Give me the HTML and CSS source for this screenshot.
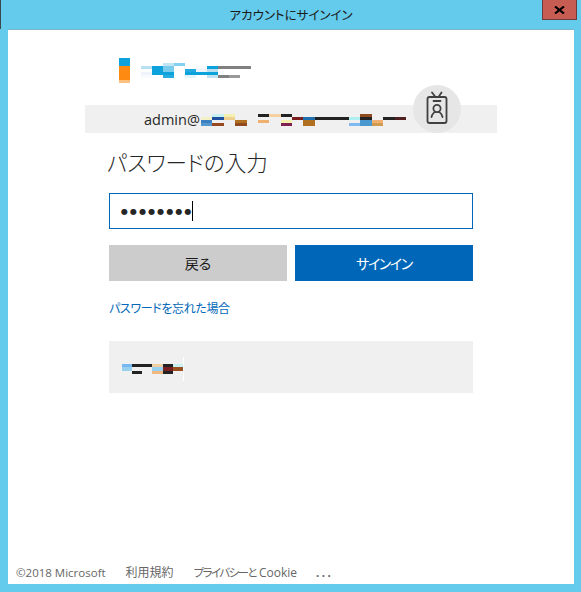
FILE: index.html
```html
<!DOCTYPE html>
<html lang="ja">
<head>
  <meta charset="UTF-8" />
  <meta name="viewport" content="width=device-width, initial-scale=1.0"/>
  <title>アカウントにサインイン</title>
  <link rel="stylesheet" href="styles.css">
</head>
<body>

  <div class="titlebar">
    <span class="title">アカウントにサインイン</span>
    <button class="close">
      <svg width="11" height="8" viewBox="0 0 11 8"><path d="M1 0.5 L10 7.5 M10 0.5 L1 7.5" stroke="#000" stroke-width="2.2" fill="none"/></svg>
    </button>
  </div>

  <div class="client">
    <!-- logo, mosaic of the screenshot -->
    <svg class="logo" width="132" height="25" viewBox="119 58 132 25" shape-rendering="crispEdges">
      <rect x="119" y="58" width="11" height="8" fill="#0ea2dc"/>
      <rect x="119" y="66" width="11" height="14" fill="#ff8a12"/>
      <rect x="119" y="80" width="11" height="3" fill="#ffc080"/>
      <rect x="141" y="66" width="11" height="3" fill="#b9e0f2"/>
      <rect x="141" y="72" width="11" height="3" fill="#f0f3fa"/>
      <rect x="141" y="75" width="11" height="3" fill="#f8fafd"/>
      <rect x="152" y="66" width="11" height="9" fill="#0ea2dc"/>
      <rect x="163" y="63" width="11" height="3" fill="#bfe5f3"/>
      <rect x="163" y="66" width="11" height="6" fill="#7accec"/>
      <rect x="163" y="72" width="11" height="3" fill="#0ea2dc"/>
      <rect x="163" y="75" width="11" height="3" fill="#25ade0"/>
      <rect x="174" y="63" width="11" height="3" fill="#85d0ee"/>
      <rect x="185" y="69" width="11" height="3" fill="#22a9df"/>
      <rect x="185" y="72" width="11" height="3" fill="#0ea2dc"/>
      <rect x="185" y="75" width="11" height="3" fill="#e4f4fa"/>
      <rect x="196" y="66" width="11" height="3" fill="#f8f9fd"/>
      <rect x="196" y="69" width="11" height="3" fill="#eef4fb"/>
      <rect x="196" y="72" width="11" height="3" fill="#0ea2dc"/>
      <rect x="207" y="66" width="11" height="3" fill="#0ea2dc"/>
      <rect x="207" y="69" width="11" height="3" fill="#b9dff0"/>
      <rect x="207" y="72" width="11" height="3" fill="#0ea2dc"/>
      <rect x="207" y="75" width="11" height="3" fill="#c0e3f2"/>
      <rect x="218" y="66" width="33" height="3" fill="#808080"/>
      <rect x="218" y="75" width="11" height="3" fill="#808080"/>
      <rect x="229" y="75" width="11" height="3" fill="#999999"/>
    </svg>

    <div class="account">
      <span class="email">admin@</span>
      <svg class="mosaic" width="205" height="12" viewBox="201 113 205 12" shape-rendering="crispEdges">
        <rect x="201" y="116" width="11" height="3" fill="#f3f0c8"/>
        <rect x="201" y="119" width="11" height="3" fill="#3a7fc0"/>
        <rect x="201" y="122" width="11" height="3" fill="#5598d0"/>
        <rect x="212" y="113" width="12" height="3" fill="#c8f0f0"/>
        <rect x="212" y="116" width="12" height="3" fill="#2050a0"/>
        <rect x="212" y="122" width="12" height="3" fill="#96491f"/>
        <rect x="224" y="113" width="11" height="3" fill="#f3f0b0"/>
        <rect x="224" y="116" width="11" height="3" fill="#f0d090"/>
        <rect x="235" y="119" width="12" height="3" fill="#b07020"/>
        <rect x="235" y="122" width="12" height="3" fill="#8f4a20"/>
        <rect x="258" y="113" width="11" height="3" fill="#222222"/>
        <rect x="258" y="119" width="11" height="3" fill="#f0b070"/>
        <rect x="269" y="113" width="12" height="3" fill="#f5d0a0"/>
        <rect x="281" y="113" width="11" height="3" fill="#222222"/>
        <rect x="281" y="119" width="11" height="3" fill="#f5f0b0"/>
        <rect x="281" y="122" width="11" height="3" fill="#802050"/>
        <rect x="292" y="116" width="11" height="3" fill="#7a2020"/>
        <rect x="303" y="116" width="12" height="3" fill="#2070b0"/>
        <rect x="303" y="119" width="12" height="6" fill="#b07020"/>
        <rect x="315" y="116" width="34" height="3" fill="#222222"/>
        <rect x="349" y="116" width="11" height="3" fill="#b0f0f0"/>
        <rect x="349" y="122" width="11" height="3" fill="#80b8f0"/>
        <rect x="360" y="113" width="12" height="3" fill="#904a20"/>
        <rect x="360" y="116" width="12" height="3" fill="#222222"/>
        <rect x="360" y="119" width="12" height="6" fill="#4a98d0"/>
        <rect x="372" y="119" width="11" height="3" fill="#f0b070"/>
        <rect x="372" y="122" width="11" height="3" fill="#d09a50"/>
        <rect x="383" y="116" width="12" height="3" fill="#222222"/>
        <rect x="395" y="116" width="11" height="3" fill="#502020"/>
      </svg>
      <div class="avatar">
        <svg width="48" height="48" viewBox="0 0 48 48" fill="none" stroke="#404040" stroke-width="1.8" stroke-linecap="round" stroke-linejoin="round">
          <rect x="14.5" y="12" width="19" height="26" rx="2"/>
          <path d="M19 7.5 L22.5 12 M28.5 7.5 L25.5 12 M20.5 16 H27.5"/>
          <circle cx="24" cy="23.5" r="3.6"/>
          <path d="M18.5 32 C19.2 29 21 27.4 22.4 27 M29.5 32 C28.8 29 27 27.4 25.6 27"/>
        </svg>
      </div>
    </div>

    <div class="form">
      <h1 class="heading">パスワードの入力</h1>
      <div class="password"><span class="dots">●●●●●●●●</span><span class="caret"></span></div>
      <div class="buttons">
        <button class="btn btn-back">戻る</button>
        <button class="btn btn-signin">サインイン</button>
      </div>
      <a class="forgot" href="#">パスワードを忘れた場合</a>
      <div class="panel">
        <svg width="62" height="24" viewBox="122 357 62 24" shape-rendering="crispEdges">
          <rect x="122" y="364" width="10" height="3" fill="#78b8f0"/>
          <rect x="122" y="367" width="10" height="4" fill="#98d0f0"/>
          <rect x="132" y="364" width="20" height="3" fill="#222222"/>
          <rect x="132" y="371" width="10" height="3" fill="#222222"/>
          <rect x="152" y="364" width="11" height="3" fill="#f0d0a0"/>
          <rect x="152" y="367" width="11" height="4" fill="#98d0f0"/>
          <rect x="152" y="371" width="11" height="3" fill="#f0b880"/>
          <rect x="163" y="364" width="10" height="3" fill="#222222"/>
          <rect x="163" y="367" width="10" height="4" fill="#7a2020"/>
          <rect x="163" y="371" width="10" height="3" fill="#222222"/>
          <rect x="173" y="364" width="10" height="3" fill="#c8f0f0"/>
          <rect x="173" y="367" width="10" height="4" fill="#9a5020"/>
          <rect x="183" y="357" width="1" height="24" fill="#ffffff"/>
        </svg>
      </div>
    </div>

    <div class="footer">
      <span class="copyright">©2018 Microsoft</span>
      <a href="#">利用規約</a>
      <a href="#"><span class="kana">プライバシーと</span> Cookie</a>
      <span class="more">...</span>
    </div>
  </div>

</body>
</html>
```

FILE: styles.css
```css
* {
  box-sizing: border-box;
}
body {
  margin: 0;
  height: 592px;
  overflow: hidden;
  background: #65cbec;
  font-family: "Open Sans", "Noto Sans CJK JP", sans-serif;
  font-feature-settings: "palt";
  color: #262626;
}
.titlebar {
  position: relative;
  height: 29px;
  display: flex;
  align-items: center;
  justify-content: center;
  border-left: 1px solid #3c4a50;
}
.title {
  font-family: "Noto Sans CJK JP", sans-serif;
  font-size: 12.5px;
  color: #1a1a1a;
}
.close {
  position: absolute;
  top: -1px;
  left: 541px;
  width: 35px;
  height: 21px;
  padding: 0;
  display: flex;
  align-items: center;
  justify-content: center;
  background: #c75c52;
  border: 1px solid #6e3b3d;
}
.client {
  display: flex;
  flex-direction: column;
  width: 566px;
  height: 555px;
  margin-left: 8px;
  background: #ffffff;
  border-top: 1px solid #7ab4cf;
}
.logo {
  display: block;
  margin: 28px 0 22px 111px;
}
.account {
  position: relative;
  display: flex;
  align-items: center;
  width: 412px;
  height: 28px;
  margin-left: 77px;
  padding-left: 59px;
  background: #f0f0f0;
}
.email {
  width: 57px;
  font-size: 14.5px;
}
.mosaic {
  display: block;
  margin-top: 2px;
}
.avatar {
  position: absolute;
  top: -20px;
  left: 328px;
  width: 48px;
  height: 48px;
  border-radius: 50%;
  background: #e6e6e6;
}
.avatar svg {
  display: block;
}
.form {
  display: flex;
  flex-direction: column;
  width: 364px;
  margin-left: 101px;
}
.heading {
  margin: 0 0 0 -2px;
  padding: 14px 0 16px;
  font-family: "Noto Sans CJK JP", sans-serif;
  font-size: 21.5px;
  font-weight: 300;
  line-height: 30px;
  color: #262626;
}
.password {
  display: flex;
  align-items: center;
  height: 36px;
  padding-left: 11px;
  border: 1px solid #0067b8;
}
.dots {
  font-family: "DejaVu Sans", sans-serif;
  font-size: 8px;
  letter-spacing: 2.1px;
  color: #262626;
}
.caret {
  width: 1px;
  height: 20px;
  margin-left: -2px;
  background: #000000;
}
.buttons {
  display: flex;
  gap: 8px;
  margin-top: 16px;
}
.btn {
  flex: 1;
  height: 36px;
  padding: 0;
  border: none;
  font-family: "Noto Sans CJK JP", sans-serif;
  font-feature-settings: "palt";
  font-size: 14px;
}
.btn-back {
  background: #cccccc;
  color: #1a1a1a;
}
.btn-signin {
  background: #0067b8;
  color: #ffffff;
  letter-spacing: -1.4px;
}
.forgot {
  margin-top: 18px;
  font-family: "Noto Sans CJK JP", sans-serif;
  font-size: 12px;
  letter-spacing: -0.35px;
  line-height: 18px;
  color: #0067b8;
  text-decoration: none;
}
.panel {
  height: 52px;
  margin-top: 24px;
  padding: 16px 0 0 13px;
  background: #f0f0f0;
}
.panel svg {
  display: block;
}
.footer {
  display: flex;
  align-items: center;
  margin-top: auto;
  height: 24px;
  padding-left: 8px;
  font-size: 11.5px;
  color: #666666;
}
.footer a {
  margin-left: 20px;
  font-size: 12px;
  color: #666666;
  text-decoration: none;
}
.kana {
  font-size: 11.5px;
  letter-spacing: -1.6px;
}
.more {
  margin-left: 19px;
  letter-spacing: 2.5px;
  font-weight: 700;
}
```
